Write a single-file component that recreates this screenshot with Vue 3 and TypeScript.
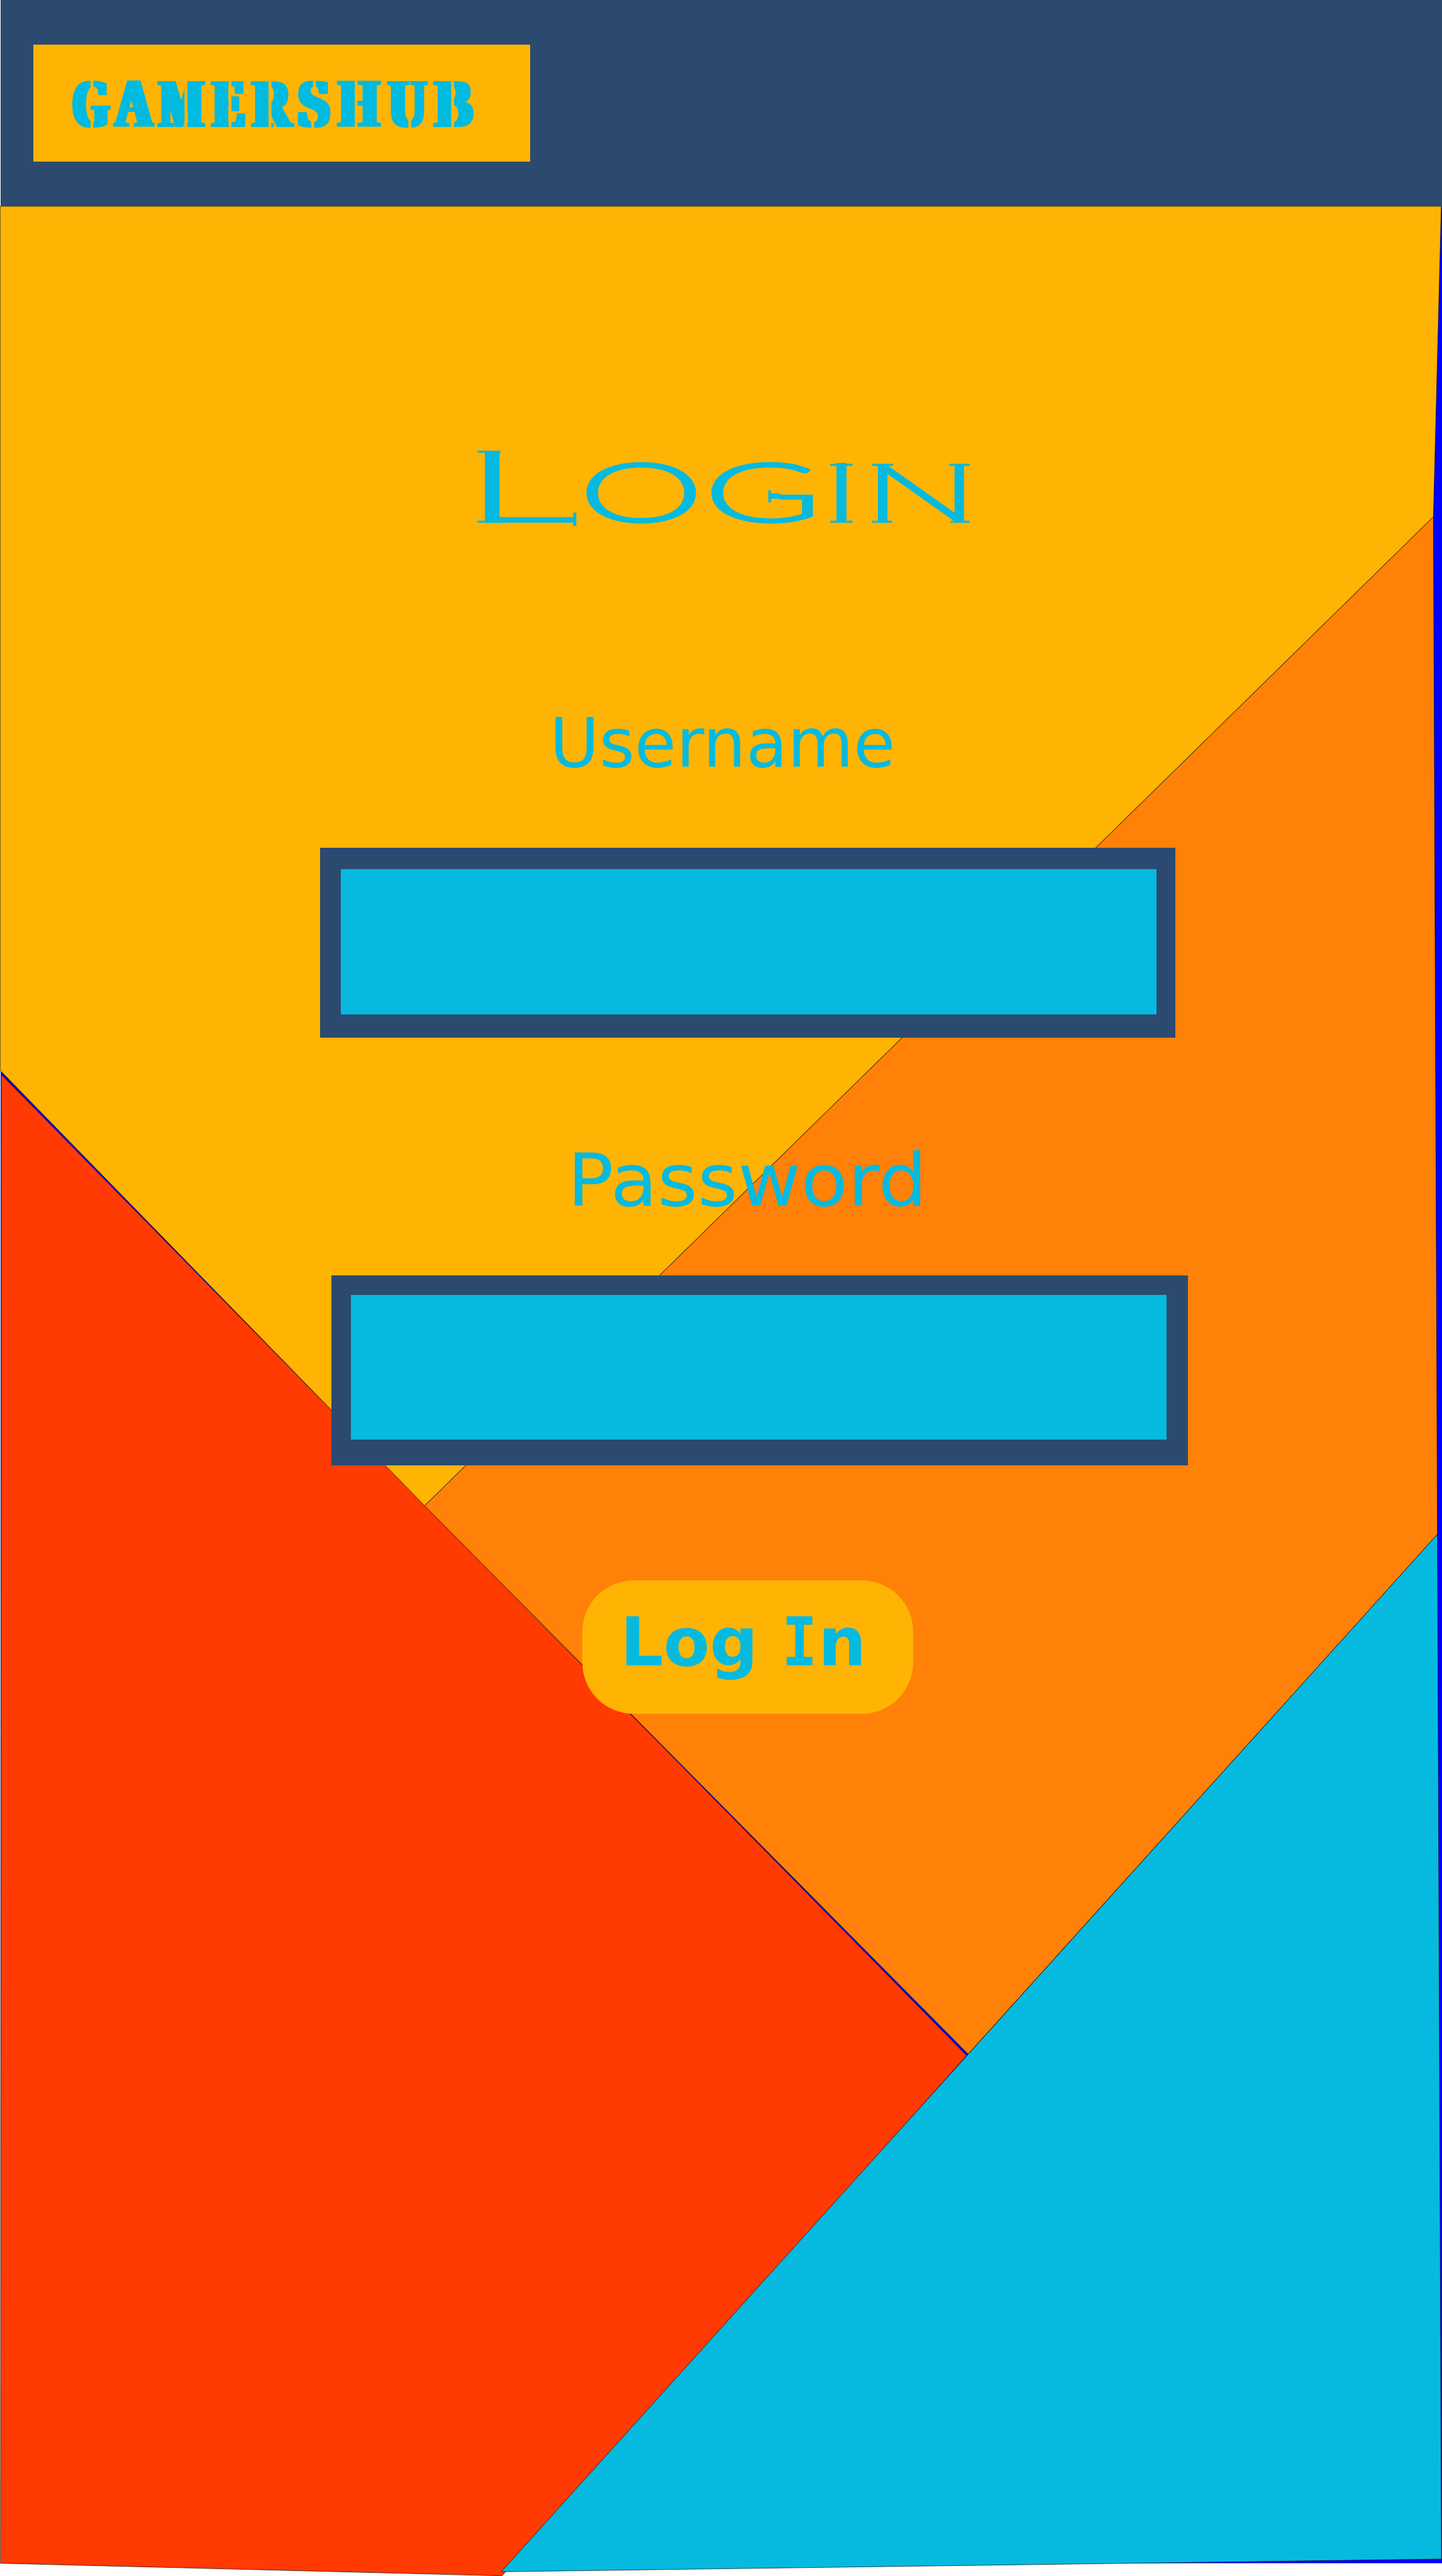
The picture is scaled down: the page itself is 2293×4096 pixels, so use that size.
<script setup lang="ts">
import { ref } from 'vue'

interface Extent {
  char: string
  left: number
  right: number
  size: number
  weight: number
  outline?: number
}

interface Glyph extends Extent {
  x: number
  y: number
  scale: number
}

const pen = document.createElement('canvas').getContext('2d')!

// Stretches every character so that its ink runs from left to right
function fit(items: Extent[], family: string, baseline: number, inset: number): Glyph[] {
  return items.map((e) => {
    pen.font = `${e.weight} ${e.size}px ${family}`
    const ink = pen.measureText(e.char)
    const inkLeft = -ink.actualBoundingBoxLeft
    const inkWidth = ink.actualBoundingBoxRight - inkLeft
    const scale = (e.right - e.left - inset * 2) / inkWidth
    return { ...e, x: e.left + inset - inkLeft * scale, y: baseline, scale }
  })
}

const brand = fit(
  [
    { char: 'G', left: 204, right: 313, size: 191, weight: 700 },
    { char: 'A', left: 319, right: 438, size: 191, weight: 700 },
    { char: 'M', left: 445, right: 581, size: 191, weight: 700 },
    { char: 'E', left: 596, right: 695, size: 191, weight: 700 },
    { char: 'R', left: 709, right: 833, size: 191, weight: 700 },
    { char: 'S', left: 843, right: 936, size: 191, weight: 700 },
    { char: 'H', left: 953, right: 1079, size: 191, weight: 700 },
    { char: 'U', left: 1095, right: 1212, size: 191, weight: 700 },
    { char: 'B', left: 1225.5, right: 1341, size: 191, weight: 700 },
  ],
  '"Liberation Serif"',
  357,
  9,
)

// Stencil bridges that split the letters of the brand
const bridges = [
  { x: 256, y: 222, h: 40 },
  { x: 256, y: 330, h: 38 },
  { x: 522, y: 222, h: 146 },
  { x: 647, y: 222, h: 146 },
  { x: 760, y: 222, h: 146 },
  { x: 886, y: 222, h: 32 },
  { x: 881, y: 338, h: 30 },
  { x: 1004, y: 222, h: 146 },
  { x: 1156, y: 335, h: 33 },
  { x: 1277, y: 222, h: 146 },
]

const title = fit(
  [
    { char: 'L', left: 1367, right: 1629, size: 280, weight: 300, outline: 4 },
    { char: 'O', left: 1660, right: 1969.5, size: 232, weight: 300, outline: 5 },
    { char: 'G', left: 2014, right: 2300, size: 232, weight: 300, outline: 5 },
    { char: 'I', left: 2365.6, right: 2398.4, size: 230, weight: 400, outline: 2 },
    { char: 'N', left: 2484, right: 2728, size: 229, weight: 300, outline: 4 },
  ],
  'Lato',
  1478,
  3,
)

// Small terminals on the ends of the title's strokes
const terminals = [
  { x: 1351.6, y: 1276, w: 65.4, h: 6 },
  { x: 1351.6, y: 1474, w: 65.4, h: 6 },
  { x: 1622, y: 1451, w: 9, h: 38 },
  { x: 2174.5, y: 1388, w: 8, h: 34 },
  { x: 2176, y: 1397, w: 32, h: 15 },
  { x: 2349.7, y: 1313, w: 63.3, h: 6 },
  { x: 2349.7, y: 1474, w: 63.3, h: 6 },
  { x: 2468, y: 1313, w: 60, h: 6 },
  { x: 2687, y: 1313, w: 58, h: 6 },
  { x: 2468, y: 1474, w: 57, h: 6 },
  { x: 2690, y: 1474, w: 55, h: 6 },
]

const username = ref('')
const password = ref('')
</script>

<template>
  <div class="screen">
    <svg class="backdrop" viewBox="0 0 4082 7293" preserveAspectRatio="none" aria-hidden="true">
      <rect x="2" y="584" width="4080" height="6672.8" fill="#0000ff" />
      <g stroke="#000" stroke-width="1.2">
        <polygon points="3.5,3042 2736.5,5819.5 1421,7292.5 1.5,7257" fill="#ff3a03" />
        <polygon points="0.5,584 4080,584 4057.7,1463 1202,4263 0.5,3030.5" fill="#ffb404" />
        <polygon points="4057.7,1463 1202,4263 2740.7,5815.5 4069,4344" fill="#ff8108" />
        <polygon points="4069,4344 1419,7281 4080.5,7245" fill="#06badf" />
      </g>
    </svg>

    <header class="bar">
      <div class="brand">
        <svg class="brand-text" viewBox="94 126 1406 331" role="img" aria-label="GAMERSHUB">
          <defs>
            <filter id="heavy" filterUnits="userSpaceOnUse" x="94" y="126" width="1406" height="331">
              <feMorphology operator="dilate" radius="9 1.8" />
            </filter>
          </defs>
          <g filter="url(#heavy)">
            <text
              v-for="g in brand"
              :key="g.x"
              :font-size="g.size"
              :font-weight="g.weight"
              :transform="`translate(${g.x} ${g.y}) scale(${g.scale} 1)`"
            >{{ g.char }}</text>
          </g>
          <rect v-for="(b, i) in bridges" :key="i" :x="b.x" :y="b.y" width="8" :height="b.h" />
        </svg>
      </div>
    </header>

    <main class="form">
      <svg class="title" viewBox="1340 1200 1420 400" role="img" aria-label="Login">
        <text
          v-for="g in title"
          :key="g.x"
          :font-size="g.size"
          :font-weight="g.weight"
          :stroke-width="g.outline"
          :transform="`translate(${g.x} ${g.y}) scale(${g.scale} 1)`"
        >{{ g.char }}</text>
        <rect v-for="(t, i) in terminals" :key="i" :x="t.x" :y="t.y" :width="t.w" :height="t.h" />
      </svg>

      <label class="label user-label" for="username">Username</label>
      <div class="field user-field">
        <input id="username" v-model="username" type="text" />
      </div>

      <label class="label pass-label" for="password">Password</label>
      <div class="field pass-field">
        <input id="password" v-model="password" type="password" />
      </div>

      <button class="submit" type="button">Log <span class="cap-i"><span>I</span></span>n</button>
    </main>
  </div>
</template>

<style>
body {
  margin: 0;
  background: #fff;
}
</style>

<style scoped>
.screen {
  --u: 0.56168px;
  --navy: #2c4a70;
  --amber: #ffb404;
  --cyan: #06badf;
  position: relative;
  width: 2293px;
  height: 4096px;
  overflow: hidden;
  font-family: 'DejaVu Sans', sans-serif;
  color: var(--cyan);
}

.backdrop {
  position: absolute;
  inset: 0;
  width: 100%;
  height: 100%;
}

.bar {
  position: relative;
  display: flex;
  box-sizing: border-box;
  height: calc(584 * var(--u));
  margin-left: calc(2 * var(--u));
  padding: calc(126 * var(--u)) 0 0 calc(92 * var(--u));
  background: var(--navy);
}

.brand {
  width: calc(1406 * var(--u));
  height: calc(331 * var(--u));
  background: var(--amber);
}

.brand-text {
  display: block;
  width: 100%;
  height: 100%;
}

.brand-text text {
  font-family: 'Liberation Serif', serif;
  fill: var(--cyan);
}

.brand-text rect {
  fill: var(--amber);
}

.form {
  position: relative;
  display: flex;
  flex-direction: column;
  align-items: flex-start;
}

.title {
  display: block;
  width: calc(1420 * var(--u));
  height: calc(400 * var(--u));
  margin: calc(616 * var(--u)) 0 0 calc(1340 * var(--u));
  overflow: visible;
}

.title text {
  font-family: Lato, sans-serif;
  fill: var(--cyan);
  stroke: var(--cyan);
}

.title rect {
  fill: var(--cyan);
}

.label {
  display: block;
  line-height: 1;
  white-space: nowrap;
  transform-origin: left center;
}

.user-label {
  margin: calc(408.6 * var(--u)) 0 0 calc(1556 * var(--u));
  font-size: calc(192 * var(--u));
}

.pass-label {
  margin: calc(302.3 * var(--u)) 0 0 calc(1606 * var(--u));
  font-size: calc(206.6 * var(--u));
  transform: scaleX(1.056);
}

.field {
  box-sizing: border-box;
  background: var(--navy);
}

.field input {
  display: block;
  box-sizing: border-box;
  width: 100%;
  height: 100%;
  margin: 0;
  padding: 0 calc(50 * var(--u));
  border: 0;
  border-radius: 0;
  outline: 0;
  background: var(--cyan);
  color: var(--navy);
  font: calc(190 * var(--u)) 'DejaVu Sans', sans-serif;
}

.user-field {
  width: calc(2422 * var(--u));
  height: calc(537.2 * var(--u));
  margin: calc(199.1 * var(--u)) 0 0 calc(905.5 * var(--u));
  padding: calc(60 * var(--u)) calc(52.6 * var(--u)) calc(65.6 * var(--u)) calc(59 * var(--u));
}

.pass-field {
  width: calc(2423.5 * var(--u));
  height: calc(537.9 * var(--u));
  margin: calc(164.9 * var(--u)) 0 0 calc(939 * var(--u));
  padding: calc(54.3 * var(--u)) calc(60.5 * var(--u)) calc(72.6 * var(--u)) calc(54.2 * var(--u));
}

.submit {
  box-sizing: border-box;
  width: calc(936.5 * var(--u));
  height: calc(377 * var(--u));
  margin: calc(325.4 * var(--u)) 0 0 calc(1648.3 * var(--u));
  padding: 0 0 calc(28 * var(--u)) calc(107.5 * var(--u));
  border: 0;
  border-radius: calc(145 * var(--u));
  background: var(--amber);
  color: var(--cyan);
  font: 700 calc(191.5 * var(--u)) / 1 'DejaVu Sans', sans-serif;
  text-align: left;
  white-space: pre;
}

.cap-i {
  display: inline-block;
  width: 0.54em;
}

.cap-i span {
  display: inline-block;
  font-family: 'DejaVu Sans Mono', monospace;
  transform: scaleX(0.875);
  transform-origin: left center;
}
</style>
